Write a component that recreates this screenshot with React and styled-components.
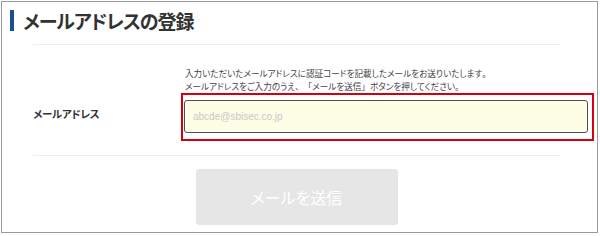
import React from "react";
import styled, { createGlobalStyle } from "styled-components";

const Global = createGlobalStyle`
  html, body { margin: 0; padding: 0; background: #fff; }
  body { font-family: "Noto Sans CJK JP", "Noto Sans", sans-serif; color: #333; }
`;

const Frame = styled.div`
  box-sizing: border-box;
  margin: 1px 0 0 1px;
  width: 597px;
  height: 232px;
  border: 1px solid #9a9a9a;
  background: #fff;
  display: flex;
  flex-direction: column;
`;

const Header = styled.div`
  display: flex;
  align-items: center;
  gap: 9px;
  padding: 8px 0 0 8px;
  height: 21px;
`;

const Bar = styled.span`
  width: 4px;
  height: 21px;
  background: #1c4f8e;
`;

const Title = styled.h1`
  margin: 0;
  font-size: 19px;
  font-weight: 700;
  color: #333;
  line-height: 21px;
  letter-spacing: -1px;
  font-feature-settings: "palt";
`;

const Content = styled.div`
  margin-left: 31px;
  width: 527px;
  display: flex;
  flex-direction: column;
`;

const Divider = styled.div`
  height: 1px;
  background: #ececec;
  margin-top: ${(p) => p.$top}px;
`;

const Row = styled.div`
  display: flex;
  align-items: flex-end;
`;

const Label = styled.div`
  width: 148px;
  flex: none;
  font-size: 10.5px;
  font-weight: 700;
  color: #333;
  letter-spacing: -0.3px;
  font-feature-settings: "palt";
  padding-bottom: 20px;
`;

const Field = styled.div`
  display: flex;
  flex-direction: column;
  margin-right: -34px;
  flex: 1;
`;

const Note = styled.p`
  margin: 22px 0 0 4px;
  font-size: 8.6px;
  line-height: 13px;
  color: #444;
  font-feature-settings: "palt";
  text-spacing-trim: space-all;
`;

const Punct = styled.span`
  font-feature-settings: normal;
  text-spacing-trim: space-all;
`;

const Highlight = styled.div`
  border: 2px solid #d5000f;
  padding: 5px 4px 6px 1px;
`;

const Input = styled.input`
  box-sizing: border-box;
  display: block;
  width: 100%;
  height: 33px;
  border: 1.5px solid #4d4d4d;
  border-radius: 3px;
  background: #fefde6;
  padding: 0 8px;
  font-family: "Liberation Sans", Arial, sans-serif;
  font-size: 10px;
  outline: none;
  &::placeholder { color: #c8c8c8; }
`;

const ButtonWrap = styled.div`
  display: flex;
  justify-content: center;
  margin-top: 13px;
`;

const SendButton = styled.button`
  width: 202px;
  height: 56px;
  border: none;
  border-radius: 3px;
  background: #e6e6e6;
  color: #fff;
  font-family: "Noto Sans CJK JP", sans-serif;
  font-size: 16px;
  font-weight: 400;
  font-feature-settings: "palt";
  cursor: default;
`;

export default function App() {
  return (
    <>
      <Global />
      <Frame>
        <Header>
          <Bar />
          <Title>メールアドレスの登録</Title>
        </Header>
        <Content>
          <Divider $top={13} />
          <Row>
            <Label>メールアドレス</Label>
            <Field>
              <Note>
                入力いただいたメールアドレスに認証コードを記載したメールをお送りいたします<Punct>。</Punct>
                <br />
                メールアドレスをご入力のうえ<Punct>、「</Punct>メールを送信<Punct>」</Punct>ボタンを押してください<Punct>。</Punct>
              </Note>
              <Highlight>
                <Input type="email" placeholder="abcde@sbisec.co.jp" />
              </Highlight>
            </Field>
          </Row>
          <Divider $top={14} />
          <ButtonWrap>
            <SendButton type="button">メールを送信</SendButton>
          </ButtonWrap>
        </Content>
      </Frame>
    </>
  );
}
